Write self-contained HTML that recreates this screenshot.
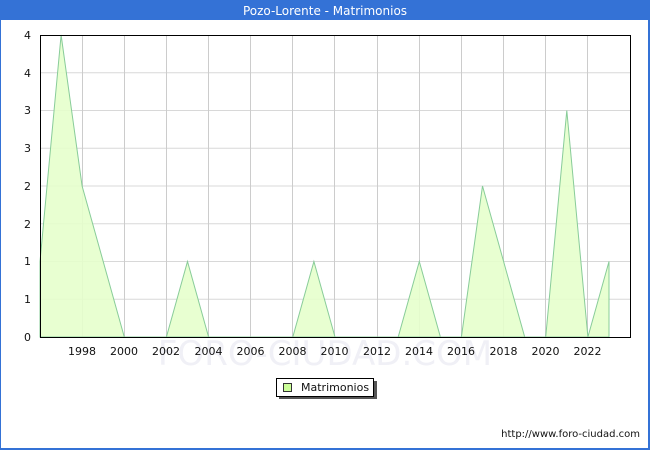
<!DOCTYPE html>
<html><head><meta charset="utf-8"><style>
body{margin:0;width:650px;height:450px;overflow:hidden;background:#fff;font-family:"DejaVu Sans","Liberation Sans",sans-serif}
</style></head><body>
<svg width="650" height="450" viewBox="0 0 650 450" xmlns="http://www.w3.org/2000/svg" font-family="DejaVu Sans, Liberation Sans, sans-serif">
<rect x="0" y="0" width="650" height="450" fill="#3472d6"/>
<rect x="1" y="20" width="647" height="428" fill="#fff"/>
<text x="325" y="15" font-size="12" fill="#fff" text-anchor="middle">Pozo-Lorente - Matrimonios</text>
<text x="325" y="365" font-size="34" fill="#f0f0f6" text-anchor="middle">FORO-CIUDAD.COM</text>
<g stroke="#d8d8d8" stroke-width="1">
<line x1="40" x2="630" y1="72.75" y2="72.75"/><line x1="40" x2="630" y1="110.5" y2="110.5"/><line x1="40" x2="630" y1="148.25" y2="148.25"/><line x1="40" x2="630" y1="186" y2="186"/><line x1="40" x2="630" y1="223.75" y2="223.75"/><line x1="40" x2="630" y1="261.5" y2="261.5"/><line x1="40" x2="630" y1="299.25" y2="299.25"/>
</g>
<g stroke="#cccccc" stroke-width="1">
<line x1="82.5" x2="82.5" y1="35" y2="337"/><line x1="124.5" x2="124.5" y1="35" y2="337"/><line x1="166.5" x2="166.5" y1="35" y2="337"/><line x1="208.5" x2="208.5" y1="35" y2="337"/><line x1="250.5" x2="250.5" y1="35" y2="337"/><line x1="292.5" x2="292.5" y1="35" y2="337"/><line x1="334.5" x2="334.5" y1="35" y2="337"/><line x1="377.5" x2="377.5" y1="35" y2="337"/><line x1="419.5" x2="419.5" y1="35" y2="337"/><line x1="461.5" x2="461.5" y1="35" y2="337"/><line x1="503.5" x2="503.5" y1="35" y2="337"/><line x1="545.5" x2="545.5" y1="35" y2="337"/><line x1="587.5" x2="587.5" y1="35" y2="337"/>
</g>
<polygon fill="#e6ffcc" fill-opacity="0.9" stroke="#88cc99" stroke-width="1" points="40,337 40,261.5 61.1,35 82.1,186 103.2,261.5 124.3,337 166.4,337 187.5,261.5 208.6,337 292.8,337 313.9,261.5 335,337 398.2,337 419.3,261.5 440.4,337 461.4,337 482.5,186 503.6,261.5 524.7,337 545.7,337 566.8,110.5 587.9,337 609,261.5 609,337"/>
<rect x="40.5" y="35.5" width="590" height="302" fill="none" stroke="#000" stroke-width="1"/>
<g font-size="11" fill="#111" text-anchor="end">
<text x="31" y="341">0</text><text x="31" y="303">1</text><text x="31" y="265">1</text><text x="31" y="228">2</text><text x="31" y="190">2</text><text x="31" y="152">3</text><text x="31" y="114">3</text><text x="31" y="77">4</text><text x="31" y="39">4</text>
</g>
<g font-size="11" fill="#111" text-anchor="middle">
<text x="82" y="355">1998</text><text x="124" y="355">2000</text><text x="166" y="355">2002</text><text x="208.5" y="355">2004</text><text x="250.5" y="355">2006</text><text x="292.5" y="355">2008</text><text x="334.5" y="355">2010</text><text x="377" y="355">2012</text><text x="419" y="355">2014</text><text x="461" y="355">2016</text><text x="503.5" y="355">2018</text><text x="545.5" y="355">2020</text><text x="587.5" y="355">2022</text>
</g>
<rect x="279" y="381" width="98" height="18" fill="#555"/>
<rect x="276.5" y="378.5" width="97" height="18" fill="#fff" stroke="#000"/>
<rect x="283.5" y="383.5" width="8" height="8" fill="#ccff99" stroke="#333"/>
<text x="301" y="391" font-size="11" fill="#111">Matrimonios</text>
<text x="640" y="437" font-size="10" fill="#111" text-anchor="end">http://www.foro-ciudad.com</text>
</svg>
</body></html>
